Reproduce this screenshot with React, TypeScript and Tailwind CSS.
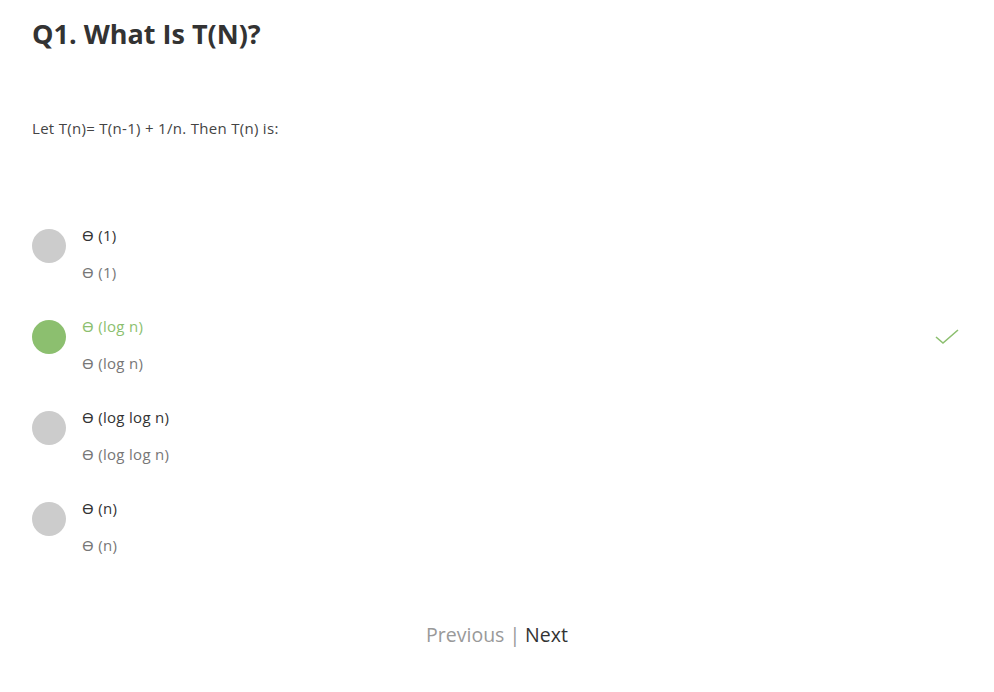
const options = [
  { label: 'ϴ (1)', correct: false },
  { label: 'ϴ (log n)', correct: true },
  { label: 'ϴ (log log n)', correct: false },
  { label: 'ϴ (n)', correct: false },
];

const App = () => {
  return (
    <div className="min-h-screen bg-white px-8 pt-[16px] font-['Open_Sans','Noto_Sans',sans-serif]">
      <h1 className="text-[27px] leading-[36px] font-bold text-[#333]">Q1. What Is T(N)?</h1>
      <p className="mt-[66px] text-[15px] leading-[20px] tracking-[0.3px] text-[#444]">Let T(n)= T(n-1) + 1/n. Then T(n) is:</p>

      <div className="mt-[91px] flex flex-col">
        {options.map((o) => (
          <div key={o.label} className="flex items-start h-[91px]">
            <div className={`w-[34px] h-[34px] rounded-full shrink-0 ${o.correct ? 'bg-[#8cbf6f]' : 'bg-[#cccccc]'}`} />
            <div className="ml-[16px] flex flex-col flex-1 -mt-[4px] tracking-[0.3px]">
              <span className={`text-[15px] leading-[20px] ${o.correct ? 'text-[#8cbf6f]' : 'text-[#333]'}`}>{o.label}</span>
              <span className="mt-[17px] text-[15px] leading-[20px] text-[#777]">{o.label}</span>
            </div>
            {o.correct && (
              <svg width="26" height="20" viewBox="0 0 26 20" className="mt-[7px] mr-[2px]">
                <path d="M2 10 L9 16 L24 3" fill="none" stroke="#8cbf6f" strokeWidth="1.6" />
              </svg>
            )}
          </div>
        ))}
      </div>

      <div className="mt-[28px] flex justify-center items-center gap-[5px] text-[19.5px] leading-[28px]">
        <span className="text-[#999]">Previous</span>
        <span className="text-[#999]">|</span>
        <span className="text-[#333]">Next</span>
      </div>
    </div>
  );
};

export default App;
